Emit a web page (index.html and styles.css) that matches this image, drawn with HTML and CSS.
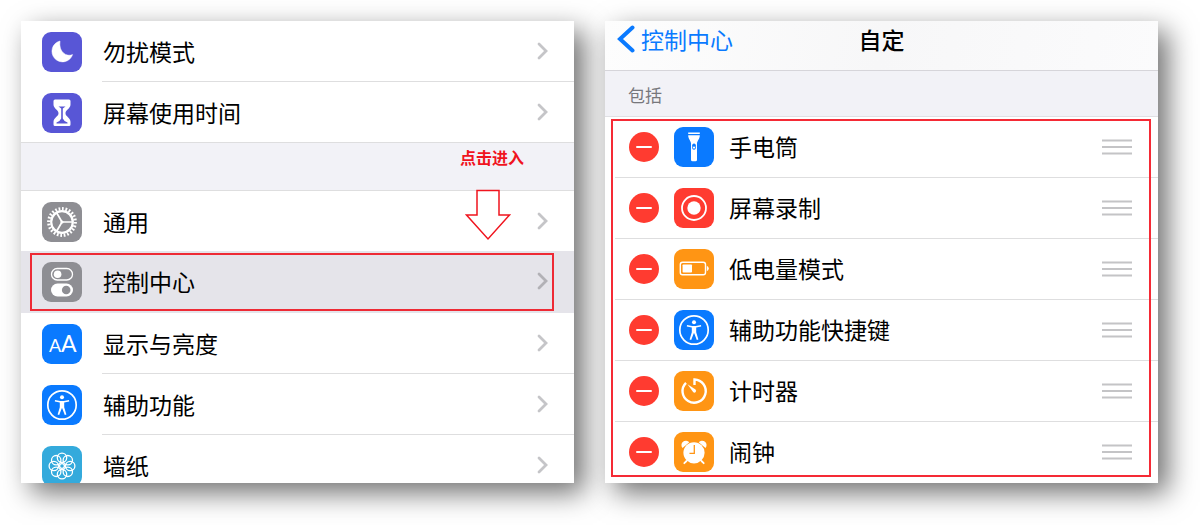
FILE: index.html
```html
<!DOCTYPE html>
<html lang="zh-CN">
<head>
    <meta charset="UTF-8" />
    <meta name="viewport" content="width=device-width, initial-scale=1.0" />
    <title>控制中心</title>
    <link rel="stylesheet" href="styles.css">
</head>
<body>
    <!-- shared symbols -->
    <svg class="symbols" aria-hidden="true">
        <symbol id="chevron" viewBox="0 0 11 18">
            <path d="M2 2l7 7-7 7" fill="none" stroke="currentColor" stroke-width="2.8" stroke-linecap="round" />
        </symbol>
        <symbol id="person" viewBox="0 0 40 40">
            <circle cx="20" cy="20" r="14.2" fill="none" stroke="#fff" stroke-width="1.7" />
            <circle cx="20" cy="12.3" r="2" fill="#fff" />
            <path d="M13 15l5.200 1h3.600l5.200-1 .2 1.400-5 1.200v4.600l2.200 7.200-1.600.5-2.600-6.700h-.4l-2.600 6.700-1.600-.5 2.200-7.200v-4.600l-5-1.200z" fill="#fff" />
        </symbol>
        <symbol id="grip" viewBox="0 0 30 16">
            <path d="M0 1.5h30M0 8h30M0 14.5h30" stroke="#c4c4c6" stroke-width="2" />
        </symbol>
    </svg>

    <main class="screens">
        <section class="panel settings">
            <a class="row" href="#">
                <svg class="icon purple" viewBox="0 0 40 40">
                    <path d="M18 9A10.6 10.6 0 1 0 30.6 22.6C25 25.2 16.4 20.5 18 9z" fill="#fff" stroke="#fff" stroke-width=".5" stroke-linejoin="round" />
                </svg>
                <span class="label">勿扰模式<svg class="chevron"><use href="#chevron" /></svg></span>
            </a>
            <a class="row" href="#">
                <svg class="icon purple" viewBox="0 0 40 40">
                    <path d="M13 6.500h14q1.500 0 1.500 1.500v3.500c0 4-5 5.500-5 8.700s5 4.700 5 8.700v2.600q0 1.500-1.500 1.500H13q-1.500 0-1.500-1.500v-2.600c0-4 5-5.500 5-8.700s-5-4.700-5-8.700V8q0-1.500 1.500-1.500z" fill="#fff" />
                    <path d="M16.500 13.500h7l-2.700 2v10q.5 2 4.700 4v1h-11v-1q4.200-2 4.700-4v-10z" fill="#5856d6" />
                </svg>
                <span class="label">屏幕使用时间<svg class="chevron"><use href="#chevron" /></svg></span>
            </a>

            <div class="spacer">
                <span class="hint">点击进入</span>
                <svg class="arrow" viewBox="0 0 46 52">
                    <path d="M12 1.500h22v24.500h10.500l-21.500 24-21.500-24H12z" fill="none" stroke="#f0141e" stroke-width="1.500" />
                </svg>
            </div>

            <a class="row" href="#">
                <svg class="icon gray" viewBox="0 0 40 40" fill="none" stroke="#fff">
                    <circle cx="20" cy="20" r="13.3" stroke-width="3.2" pathLength="96" stroke-dasharray="2 2" />
                    <circle cx="20" cy="20" r="10.8" stroke-width="2.2" />
                    <path d="M20 20h11M20 20l-5.500-9.500M20 20l-5.500 9.500" stroke-width="1.7" />
                    <circle cx="20" cy="20" r="1" stroke-width="1.2" />
                </svg>
                <span class="label">通用<svg class="chevron"><use href="#chevron" /></svg></span>
            </a>
            <a class="row active" href="#">
                <svg class="icon gray" viewBox="0 0 40 40">
                    <rect x="9.5" y="6.5" width="21" height="11.5" rx="5.7" fill="none" stroke="#fff" stroke-width="1.3" />
                    <circle cx="15.6" cy="12.3" r="3.8" fill="#fff" />
                    <rect x="9" y="21.5" width="22" height="13" rx="6.5" fill="#fff" />
                    <circle cx="24.2" cy="28" r="4.3" fill="#8e8e93" />
                </svg>
                <span class="label">控制中心<svg class="chevron"><use href="#chevron" /></svg></span>
            </a>
            <a class="row" href="#">
                <svg class="icon blue" viewBox="0 0 40 40">
                    <text class="glyph" x="7" y="28" font-size="18">A</text>
                    <text class="glyph" x="19" y="28" font-size="23">A</text>
                </svg>
                <span class="label">显示与亮度<svg class="chevron"><use href="#chevron" /></svg></span>
            </a>
            <a class="row" href="#">
                <svg class="icon blue"><use href="#person" /></svg>
                <span class="label">辅助功能<svg class="chevron"><use href="#chevron" /></svg></span>
            </a>
            <a class="row" href="#">
                <svg class="icon cyan" viewBox="0 0 40 40" fill="none" stroke="#fff" stroke-width="1.3">
                    <circle cx="20" cy="11.8" r="4.7" />
                    <circle cx="25.8" cy="14.2" r="4.7" />
                    <circle cx="28.2" cy="20" r="4.7" />
                    <circle cx="25.8" cy="25.8" r="4.7" />
                    <circle cx="20" cy="28.2" r="4.7" />
                    <circle cx="14.2" cy="25.8" r="4.7" />
                    <circle cx="11.8" cy="20" r="4.7" />
                    <circle cx="14.2" cy="14.2" r="4.7" />
                    <circle cx="20" cy="20" r="2.4" />
                </svg>
                <span class="label">墙纸<svg class="chevron"><use href="#chevron" /></svg></span>
            </a>
        </section>

        <section class="panel">
            <header class="navbar">
                <a class="back" href="#">
                    <svg viewBox="0 0 18 28"><path d="M15.500 2.500L3 14l12.500 11.500" fill="none" stroke="currentColor" stroke-width="4" stroke-linecap="round" /></svg>
                    控制中心
                </a>
                <h1>自定</h1>
            </header>
            <h2 class="section-title">包括</h2>
            <ul class="controls">
                <li>
                    <button class="remove" aria-label="移除手电筒"></button>
                    <svg class="icon blue" viewBox="0 0 40 40">
                        <path d="M14.200 5.500h11.600v1.600H14.200zM14.200 8.200h11.600c0 4-2.800 5.500-2.800 8.300v16.200q0 1.500-1.500 1.500h-3q-1.500 0-1.500-1.500V16.500c0-2.800-2.800-4.300-2.800-8.300z" fill="#fff" />
                        <rect x="18.2" y="16.5" width="3.6" height="6.2" rx="1.8" fill="#0a7aff" />
                        <circle cx="20" cy="20.6" r="1.1" fill="#fff" />
                    </svg>
                    <span class="name">手电筒</span>
                    <svg class="grip"><use href="#grip" /></svg>
                </li>
                <li>
                    <button class="remove" aria-label="移除屏幕录制"></button>
                    <svg class="icon red" viewBox="0 0 40 40">
                        <circle cx="20" cy="20" r="12" fill="none" stroke="#fff" stroke-width="1.8" />
                        <circle cx="20" cy="20" r="6.7" fill="#fff" />
                    </svg>
                    <span class="name">屏幕录制</span>
                    <svg class="grip"><use href="#grip" /></svg>
                </li>
                <li>
                    <button class="remove" aria-label="移除低电量模式"></button>
                    <svg class="icon orange" viewBox="0 0 40 40">
                        <rect x="6.3" y="13.3" width="25.2" height="12.4" rx="2.2" fill="none" stroke="#fff" stroke-width="1.4" />
                        <rect x="8.6" y="15.5" width="9.4" height="8" rx=".8" fill="#fff" />
                        <path d="M32.800 16.800q2 1 2 2.700t-2 2.700z" fill="#fff" />
                    </svg>
                    <span class="name">低电量模式</span>
                    <svg class="grip"><use href="#grip" /></svg>
                </li>
                <li>
                    <button class="remove" aria-label="移除辅助功能快捷键"></button>
                    <svg class="icon blue"><use href="#person" /></svg>
                    <span class="name">辅助功能快捷键</span>
                    <svg class="grip"><use href="#grip" /></svg>
                </li>
                <li>
                    <button class="remove" aria-label="移除计时器"></button>
                    <svg class="icon orange" viewBox="0 0 40 40">
                        <path d="M20.500 14V8.500A11.600 11.600 0 1 1 12 11.800" fill="none" stroke="#fff" stroke-width="2.4" />
                        <path d="M13.500 13.200l8 5.400q1.200 1.300.2 2.500-1.300 1.200-2.600 0z" fill="#fff" />
                    </svg>
                    <span class="name">计时器</span>
                    <svg class="grip"><use href="#grip" /></svg>
                </li>
                <li>
                    <button class="remove" aria-label="移除闹钟"></button>
                    <svg class="icon orange" viewBox="0 0 40 40">
                        <circle cx="20" cy="20.8" r="10.6" fill="#fff" />
                        <path d="M8.500 16a4.300 4.300 0 0 1 6.800-5.800zM31.500 16a4.300 4.300 0 0 0-6.800-5.800z" fill="#fff" />
                        <path d="M12.500 29l-2.200 2.200M27.500 29l2.200 2.200" stroke="#fff" stroke-width="1.8" stroke-linecap="round" />
                        <path d="M20.300 13v8.300h-4.800" fill="none" stroke="#ff9514" stroke-width="1.3" />
                    </svg>
                    <span class="name">闹钟</span>
                    <svg class="grip"><use href="#grip" /></svg>
                </li>
            </ul>
        </section>
    </main>
</body>
</html>
```

FILE: styles.css
```css
* {
    box-sizing: border-box;
}

body {
    margin: 0;
    background: #fff;
    color: #000;
    font-family: 'Noto Sans CJK SC', sans-serif;
    font-size: 23px;
    line-height: 32px;
}

a {
    color: inherit;
    text-decoration: none;
}

.symbols {
    position: absolute;
    width: 0;
    height: 0;
}

.screens {
    display: grid;
    grid-template-columns: 1fr 1fr;
    gap: 31px;
    padding: 21px 42px 42px 21px;
}

.panel {
    background: #fff;
    box-shadow: 10px 10px 26px rgba(0, 0, 0, 0.56);
}

/* the longer list is cut off at the height of its neighbour */
.settings {
    height: 0;
    min-height: 100%;
    overflow: hidden;
}

.icon {
    flex: none;
    width: 40px;
    height: 40px;
    border-radius: 9px;
}

.purple {
    background: #5856d6;
}

.gray {
    background: #8e8e93;
}

.blue {
    background: #0a7aff;
}

.cyan {
    background: #34aadc;
}

.red {
    background: #ff3b30;
}

.orange {
    background: #ff9514;
}

.glyph {
    font-family: Lato, sans-serif;
    fill: #fff;
}

/* settings list */
.row {
    position: relative;
    display: flex;
    align-items: center;
    gap: 20px;
    height: 61px;
    padding-left: 21px;
}

.label {
    flex: 1;
    display: flex;
    align-items: center;
    justify-content: space-between;
    height: 61px;
    padding: 0 26px 1px 1px;
    border-bottom: 1px solid #dededf;
}

.chevron {
    width: 11px;
    height: 18px;
    color: #c5c5c8;
}

.row.active {
    margin-top: -1px;
    height: 62px;
    background: #e5e4ea;
}

    .row.active .label {
        border-color: transparent;
    }

    .row.active .chevron {
        color: #b2b1b6;
    }

    .row.active::after {
        content: '';
        position: absolute;
        inset: 2px 20px 2px 9px;
        border: 2px solid #ee2a35;
    }

.spacer {
    position: relative;
    height: 49px;
    margin-top: -1px;
    background: #f2f2f7;
    border-top: 1px solid #dededf;
    border-bottom: 1px solid #dededf;
}

.hint {
    position: absolute;
    top: 2px;
    right: 50px;
    color: #f0141e;
    font-size: 16px;
    font-weight: bold;
    line-height: 24px;
}

.arrow {
    position: absolute;
    top: 46px;
    right: 63px;
    z-index: 1;
    width: 46px;
    height: 52px;
}

/* control center list */
.navbar {
    display: grid;
    grid-template-columns: 1fr auto 1fr;
    height: 50px;
    padding: 2px 12px 0;
    background: linear-gradient(100deg, #fdfdfd, #f7f7f8 50%, #fbfbfc);
    border-bottom: 1px solid #d6d5da;
}

.back {
    display: flex;
    align-items: center;
    gap: 6px;
    height: 32px;
    color: #0a7aff;
}

    .back svg {
        width: 18px;
        height: 28px;
    }

h1 {
    margin: 0;
    font-size: 23px;
    font-weight: 500;
    line-height: 32px;
}

.section-title {
    height: 46px;
    margin: 0;
    padding: 12px 23px 0;
    background: #f2f2f7;
    border-bottom: 1px solid #e0e0e4;
    color: #77777c;
    font-size: 17px;
    font-weight: normal;
    line-height: 24px;
}

.controls {
    position: relative;
    margin: 0;
    padding: 0 0 0 10px;
    list-style: none;
}

    .controls::after {
        content: '';
        position: absolute;
        inset: 2px 7px 6px 6px;
        border: 2px solid #f52a35;
        pointer-events: none;
    }

    .controls li {
        display: flex;
        align-items: center;
        gap: 15px;
        height: 61px;
        padding: 0 26px 0 14px;
        border-bottom: 1px solid #dededf;
    }

    .controls li:last-child {
        border-color: transparent;
    }

.remove {
    display: grid;
    place-items: center;
    width: 30px;
    height: 30px;
    padding: 0;
    border: none;
    border-radius: 50%;
    background: #ff3b30;
    cursor: pointer;
}

    .remove::before {
        content: '';
        width: 16px;
        height: 2px;
        border-radius: 1px;
        background: #fff;
    }

.name {
    flex: 1;
    padding-bottom: 2px;
}

.grip {
    width: 30px;
    height: 16px;
}
```
